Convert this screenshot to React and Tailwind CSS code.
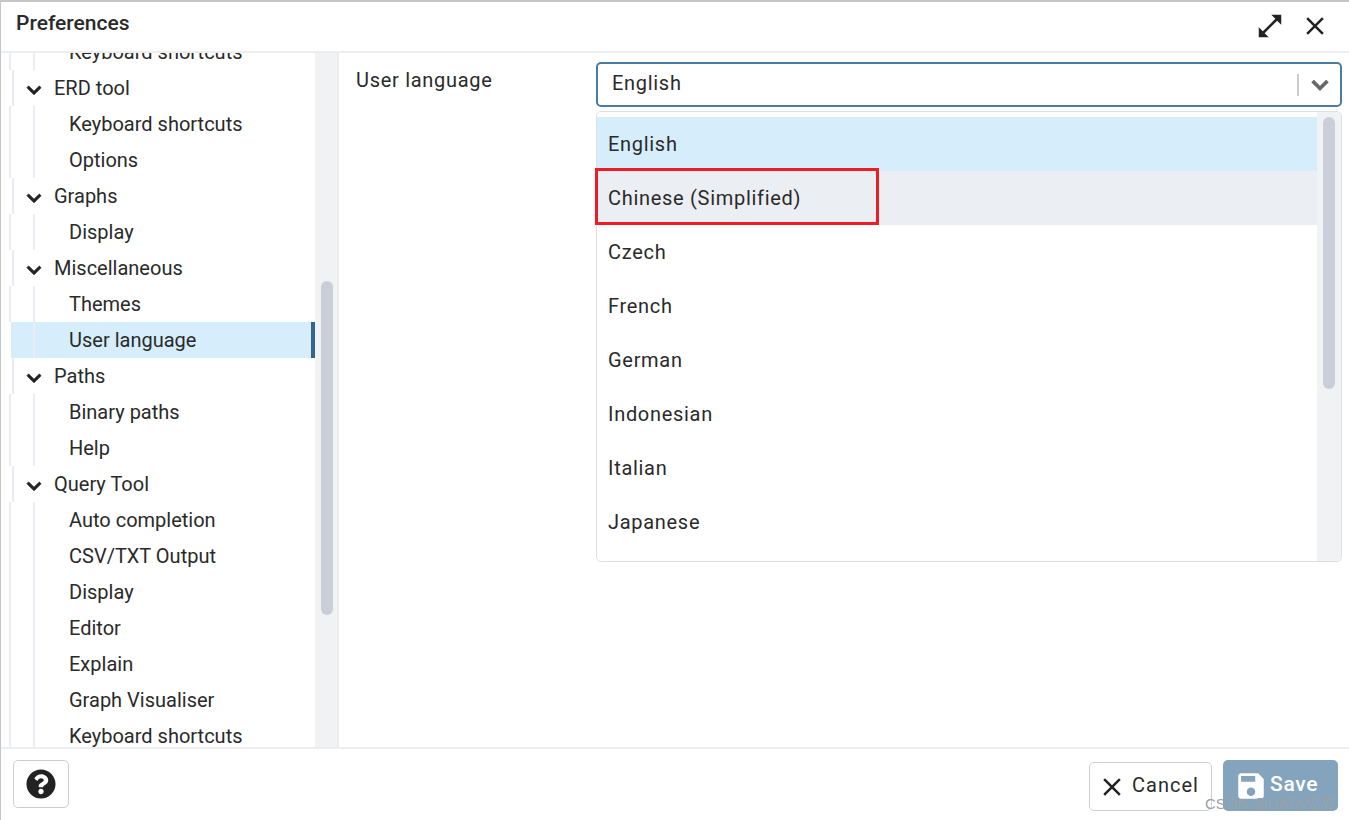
import React from 'react';
import { FaQuestionCircle } from 'react-icons/fa';

const CLOSE = 'M19 6.41 17.59 5 12 10.59 6.41 5 5 6.41 10.59 12 5 17.59 6.41 19 12 13.41 17.59 19 19 17.59 13.41 12z';
const EXPAND = 'M21 11V3h-8l3.29 3.29-10 10L3 13v8h8l-3.29-3.29 10-10z';
const CHEVRON = 'M7.41 8.59 12 13.17l4.59-4.58L18 10l-6 6-6-6 1.41-1.41z';
const SAVE = 'M17 3H5c-1.11 0-2 .9-2 2v14c0 1.1.89 2 2 2h14c1.1 0 2-.9 2-2V7l-4-4zm-5 16c-1.66 0-3-1.34-3-3s1.34-3 3-3 3 1.34 3 3-1.34 3-3 3zm3-10H5V5h10v4z';

const Icon = ({ d, className }) => (
    <svg viewBox="0 0 24 24" fill="currentColor" className={className}>
        <path d={d} />
    </svg>
);

const TREE = [
    { label: 'Keyboard shortcuts' },
    { label: 'ERD tool', group: true },
    { label: 'Keyboard shortcuts' },
    { label: 'Options' },
    { label: 'Graphs', group: true },
    { label: 'Display' },
    { label: 'Miscellaneous', group: true },
    { label: 'Themes' },
    { label: 'User language', selected: true },
    { label: 'Paths', group: true },
    { label: 'Binary paths' },
    { label: 'Help' },
    { label: 'Query Tool', group: true },
    { label: 'Auto completion' },
    { label: 'CSV/TXT Output' },
    { label: 'Display' },
    { label: 'Editor' },
    { label: 'Explain' },
    { label: 'Graph Visualiser' },
    { label: 'Keyboard shortcuts' },
];

const LANGUAGES = ['English', 'Chinese (Simplified)', 'Czech', 'French', 'German', 'Indonesian', 'Italian', 'Japanese'];

const TreeRow = ({ item }) => {
    if (item.group) {
        return (
            <div className="h-[36px] shrink-0 flex items-center">
                <div className="w-[11px] shrink-0" />
                <div className="w-[2px] h-full shrink-0 bg-[#e9edf3]" />
                <Icon d={CHEVRON} className="w-[28px] h-[28px] ml-[6px] mt-[4px] shrink-0 text-[#222222] stroke-[#222222] stroke-[0.8]" />
                <span className="ml-[6px]">{item.label}</span>
            </div>
        );
    }
    return (
        <div className={`h-[36px] shrink-0 flex items-center ${item.selected ? 'bg-[#d6eefb] border-r-4 border-[#326690] ml-[10px]' : 'ml-[8px]'}`}>
            {!item.selected && <div className="w-[2px] h-full shrink-0 bg-[#e9edf3]" />}
            <div className="w-[22px] shrink-0" />
            <div className="w-[2px] h-full shrink-0 bg-[#e9edf3]" />
            <span className="ml-[34px] mb-[1px]">{item.label}</span>
        </div>
    );
};

const App = () => {
    return (
        <div className="w-[1349px] h-[820px] relative flex flex-col overflow-hidden bg-white text-[#2a2a2a] text-[20px] border-l border-t-2 border-[#c4c6c8] font-['Roboto',sans-serif]">
            {/* title bar */}
            <div className="h-[51px] shrink-0 flex items-center border-b-2 border-[#eceef1] pl-[15px] pr-[19px]">
                <span className="font-medium text-[21px] mb-[6px]">Preferences</span>
                <Icon d={EXPAND} className="w-[30px] h-[30px] ml-auto mb-[2px] text-[#222222]" />
                <Icon d={CLOSE} className="w-[30px] h-[30px] ml-[15px] mb-[2px] text-[#222222]" />
            </div>

            {/* body */}
            <div className="flex-1 min-h-0 flex">
                <div className="w-[314px] shrink-0 overflow-hidden">
                    <div className="-mt-[19px] flex flex-col">
                        {TREE.map((item, index) => (
                            <TreeRow key={index} item={item} />
                        ))}
                    </div>
                </div>
                <div className="w-[24px] shrink-0 bg-[#f1f2f4] border-r-2 border-[#e9ebef] pl-[6px] pt-[228px]">
                    <div className="w-[12px] h-[334px] rounded-full bg-[#c9ced9]" />
                </div>
                <div className="flex-1 min-w-0 flex tracking-[0.7px]">
                    <div className="w-[257px] shrink-0 pl-[17px] pt-[12px]">User language</div>
                    <div className="w-[746px] shrink-0 pt-[9px]">
                        <div className="h-[45px] flex items-center rounded-[5px] border-2 border-[#4c7ba1] pl-[14px] pr-[4px]">
                            <span className="mb-[3px]">English</span>
                            <div className="ml-auto w-[2px] h-[22px] bg-[#cccccc]" />
                            <Icon d={CHEVRON} className="w-[32px] h-[32px] ml-[5px] text-[#666666] stroke-[#666666] stroke-[0.8]" />
                        </div>
                        <div className="h-[451px] mt-[4px] flex rounded-[5px] border border-[#dde0e6]">
                            <div className="flex-1 min-w-0 pt-[5px]">
                                {LANGUAGES.map((lang, index) => (
                                    <div
                                        key={lang}
                                        className={`h-[54px] relative flex items-center pl-[11px] ${index === 0 ? 'bg-[#d6eefb]' : index === 1 ? 'bg-[#ebeef2]' : ''}`}
                                    >
                                        {lang}
                                        {index === 1 && (
                                            <div className="absolute -left-[2px] -top-[3px] w-[284px] h-[57px] border-[3px] border-[#ee1c25]" />
                                        )}
                                    </div>
                                ))}
                            </div>
                            <div className="w-[24px] shrink-0 bg-[#f1f2f4] rounded-r-[5px] pl-[6px] pt-[5px]">
                                <div className="w-[12px] h-[272px] rounded-full bg-[#c9ced9]" />
                            </div>
                        </div>
                    </div>
                </div>
            </div>

            {/* footer */}
            <div className="h-[73px] shrink-0 flex items-start border-t-2 border-[#eceef1] pl-[12px] pr-[11px]">
                <button className="w-[56px] h-[48px] mt-[11px] flex items-center justify-center rounded-[5px] border border-[#c9ced9]">
                    <FaQuestionCircle className="w-[30px] h-[30px] text-[#222222]" />
                </button>
                <button className="w-[123px] h-[49px] mt-[13px] ml-auto flex items-center justify-start pl-[7px] gap-[5px] rounded-[5px] border border-[#c9ced9]">
                    <Icon d={CLOSE} className="w-[30px] h-[30px] text-[#222222]" />
                    <span className="tracking-[1px] mb-[4px]">Cancel</span>
                </button>
                <button className="w-[115px] h-[51px] mt-[11px] ml-[11px] flex items-center justify-start pl-[11px] gap-[2px] rounded-[5px] bg-[#84a4bd] text-white font-medium">
                    <Icon d={SAVE} className="w-[34px] h-[34px]" />
                    <span className="tracking-[0.7px] text-[21px] mb-[2px]">Save</span>
                </button>
            </div>

            {/* watermark */}
            <div className="absolute left-[1204px] top-[791px] text-[15px] text-[#9aa0a6] font-['Liberation_Sans','Noto_Sans_CJK_SC',sans-serif] whitespace-nowrap">
                CSDN @DATA无界
            </div>
        </div>
    );
};

export default App;
